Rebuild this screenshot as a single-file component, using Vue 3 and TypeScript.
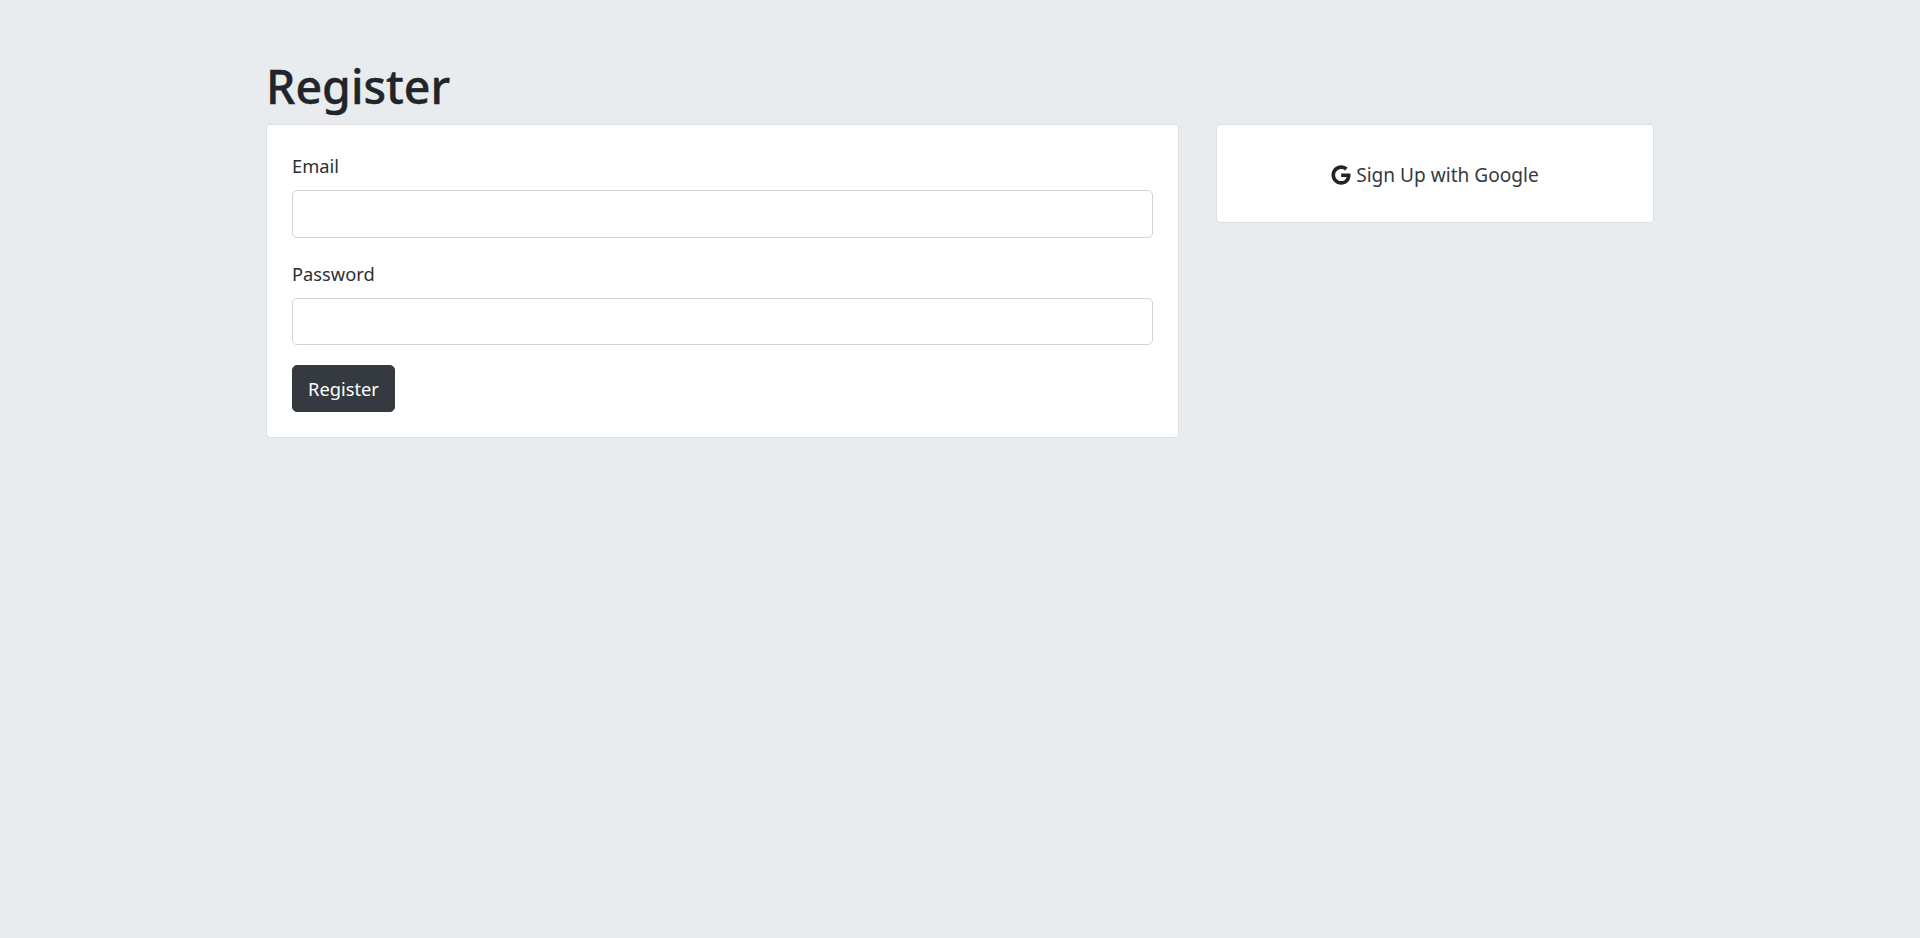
<script setup lang="ts">
const fields: { label: string; type: string }[] = [
  { label: 'Email', type: 'email' },
  { label: 'Password', type: 'password' },
]
</script>

<template>
  <main class="page">
    <h1 class="title">Register</h1>
    <div class="columns">
      <section class="card">
        <form class="card-body" @submit.prevent>
          <div v-for="f in fields" :key="f.label" class="field">
            <label class="label">{{ f.label }}</label>
            <input class="input" :type="f.type" />
          </div>
          <button class="submit" type="submit">Register</button>
        </form>
      </section>
      <section class="card side">
        <div class="card-body center">
          <a class="google" href="#">
            <svg class="g-icon" viewBox="0 0 488 512" aria-hidden="true">
              <path fill="currentColor" d="M488 261.8C488 403.3 391.1 504 248 504 110.8 504 0 393.2 0 256S110.8 8 248 8c66.8 0 123 24.5 166.3 64.9l-67.5 64.9C258.5 52.6 94.3 116.6 94.3 256c0 86.5 69.1 156.6 153.7 156.6 98.2 0 135-70.4 140.8-106.9H248v-85.3h236.1c2.3 12.7 3.9 24.9 3.9 41.4z" />
            </svg>
            <span class="g-text">Sign Up with Google</span>
          </a>
        </div>
      </section>
    </div>
  </main>
</template>

<style>
html, body { margin: 0; background: #e9ecef; }
</style>

<style scoped>
.page {
  width: 1388px;
  margin: 0 auto;
  padding-top: 54px;
  min-height: 884px;
  font-family: "Noto Sans", "Open Sans", sans-serif;
  color: #212529;
}
.title {
  margin: 0 0 6px;
  font-size: 46.5px;
  line-height: 64px;
  font-weight: 500;
  -webkit-text-stroke: 0.4px #212529;
}
.columns {
  display: grid;
  grid-template-columns: 913px 438px;
  column-gap: 37px;
  align-items: start;
}
.card {
  background: #fff;
  border: 1px solid rgba(0, 0, 0, 0.125);
  border-radius: 5px;
}
.card-body { padding: 25px; }
.field { margin-bottom: 20px; }
.label {
  display: block;
  margin-bottom: 8px;
  font-size: 18.3px;
  line-height: 32px;
  color: #2b3035;
}
.input {
  display: block;
  box-sizing: border-box;
  width: 100%;
  height: 47.5px;
  background: #fff;
  border: 1px solid #ced4da;
  border-radius: 5px;
}
.submit {
  display: block;
  height: 47px;
  width: 103px;
  padding: 0;
  background: #343a40;
  border: 1px solid #343a40;
  border-radius: 5px;
  color: #fff;
  font-family: inherit;
  font-size: 18.3px;
  line-height: 30px;
}
.center {
  display: flex;
  justify-content: center;
  align-items: center;
  height: 47px;
}
.google {
  display: flex;
  align-items: center;
  gap: 5px;
  margin-top: 2px;
  color: #343a40;
  text-decoration: none;
  font-size: 19.1px;
  line-height: 32px;
}
.g-icon { width: 20px; height: 20px; display: block; color: #212529; }
</style>
